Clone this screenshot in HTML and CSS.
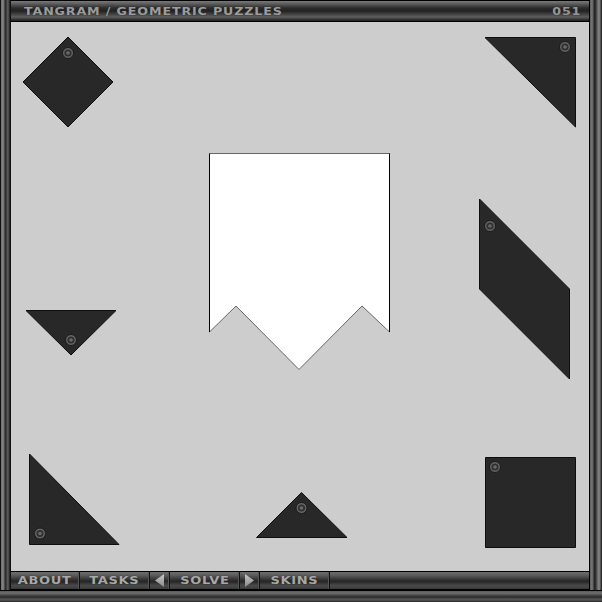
FILE: index.html
```html
<!DOCTYPE html>
<html lang="en">
<head>
    <meta charset="UTF-8">
    <title>Tangram / Geometric Puzzles</title>
    <link rel="stylesheet" href="styles.css">
</head>
<body>
    <div class="frame">
        <div class="side side-left"></div>
        <div class="topbar">
            <span class="title">TANGRAM / GEOMETRIC PUZZLES</span>
            <span class="number">051</span>
        </div>
        <div class="side side-right"></div>

        <div class="board">
            <svg class="pieces" width="578" height="549" viewBox="11 22 578 549">
                <defs>
                    <g id="screw">
                        <circle r="5.5" fill="#666" stroke="#1a1a1a" stroke-width="1"/>
                        <circle r="3.6" fill="#303030"/>
                        <circle r="1.8" fill="#6a6a6a"/>
                    </g>
                </defs>

                <!-- target figure -->
                <polygon class="target" points="209.5,153.5 389.5,153.5 389.5,332 362,306 299,369.5 236,306 209.5,332"/>
                <line x1="209.5" y1="153.5" x2="209.5" y2="332" stroke="#000" stroke-width="1"/>
                <line x1="389.5" y1="153.5" x2="389.5" y2="332" stroke="#000" stroke-width="1"/>

                <!-- pieces -->
                <polygon class="piece" points="68,37 113,82 68,127 23,82"/>
                <use href="#screw" x="68" y="53"/>

                <polygon class="piece" points="485,37.5 575.5,37.5 575.5,127"/>
                <use href="#screw" x="565" y="47"/>

                <polygon class="piece" points="26,310.5 116,310.5 71,355"/>
                <use href="#screw" x="71" y="340"/>

                <polygon class="piece" points="479.5,199 569.5,289 569.5,379 479.5,289"/>
                <use href="#screw" x="490" y="226"/>

                <polygon class="piece" points="29.5,454 119,544.5 29.5,544.5"/>
                <use href="#screw" x="40" y="533.5"/>

                <polygon class="piece" points="301.5,492.5 347,537.5 256.5,537.5"/>
                <use href="#screw" x="301.5" y="508"/>

                <polygon class="piece" points="485.5,457.5 575.5,457.5 575.5,547.5 485.5,547.5"/>
                <use href="#screw" x="495" y="467"/>
            </svg>
        </div>

        <div class="bottombar">
            <a class="btn btn-about"><span class="label">ABOUT</span></a>
            <a class="btn"><span class="label">TASKS</span></a>
            <a class="btn btn-arrow">
                <svg width="9" height="13" viewBox="0 0 9 13"><polygon points="9,0 9,13 0,6.5" fill="url(#arrowGrad)"/></svg>
            </a>
            <a class="btn"><span class="label">SOLVE</span></a>
            <a class="btn btn-arrow">
                <svg width="9" height="13" viewBox="0 0 9 13">
                    <defs>
                        <linearGradient id="arrowGrad" x1="0" y1="0" x2="0" y2="1">
                            <stop offset="0" stop-color="#c8c8c8"/>
                            <stop offset="1" stop-color="#8a8a8a"/>
                        </linearGradient>
                    </defs>
                    <polygon points="0,0 9,6.5 0,13" fill="url(#arrowGrad)"/>
                </svg>
            </a>
            <a class="btn"><span class="label">SKINS</span></a>
        </div>
        <div class="bottomstrip"></div>
    </div>
</body>
</html>
```

FILE: styles.css
```css
body { margin: 0; background: #000; font-family: "DejaVu Sans", "Liberation Sans", sans-serif; }

.frame {
    width: 602px;
    height: 602px;
    display: grid;
    grid-template-columns: 11px 578px 13px;
    grid-template-rows: 22px 549px 19px 12px;
    background: #111;
}

.side { grid-row: 1 / 4; }
.side-left {
    grid-column: 1;
    background: linear-gradient(to right, #111 0, #111 1px, #6a6a6a 1px, #8a8a8a 3px, #3a3a3a 5px, #222 6px, #5e5e5e 7px, #444 9px, #111 10px, #111 11px);
}
.side-right {
    grid-column: 3;
    background: linear-gradient(to right, #000 0, #000 1px, #5a5a5a 1px, #7a7a7a 3px, #333 5px, #1e1e1e 6px, #5a5a5a 8px, #8a8a8a 10px, #444 12px, #111 13px);
}

.topbar {
    grid-column: 2;
    grid-row: 1;
    display: flex;
    align-items: center;
    justify-content: space-between;
    padding: 0 8px 0 13px;
    border-top: 1px solid #000;
    border-bottom: 1px solid #000;
    background: linear-gradient(to bottom, #7a7a7a 0, #5a5a5a 15%, #2c2c2c 35%, #222 50%, #4a4a4a 70%, #5e5e5e 80%, #333 92%, #1e1e1e 100%);
}
.title, .number {
    font-size: 11px;
    font-weight: bold;
    letter-spacing: 0.75px;
    color: #9c9c9c;
    text-shadow: 0 0 1px #222;
    line-height: 1;
    padding-top: 1px;
    transform: scaleX(1.15);
}
.title { transform-origin: left center; }
.number { transform-origin: right center; color: #959595; }

.board {
    grid-column: 2;
    grid-row: 2;
    background: #cdcdcd;
    position: relative;
    overflow: hidden;
}
.pieces { display: block; }
.piece { fill: #282828; stroke: #0e0e0e; stroke-width: 1; }
.target { fill: #fff; stroke: #666; stroke-width: 1; }

.bottombar {
    grid-column: 2;
    grid-row: 3;
    display: flex;
    border-top: 1px solid #000;
    border-bottom: 1px solid #000;
    background: linear-gradient(to bottom, #6e6e6e 0, #5a5a5a 20%, #333 45%, #262626 55%, #4a4a4a 80%, #3a3a3a 100%);
}
.btn {
    width: 70px;
    display: flex;
    align-items: center;
    justify-content: center;
    border-right: 1px solid #111;
    box-shadow: inset -1px 0 0 #555;
    box-sizing: border-box;
}
.btn-about { width: 69px; }
.btn-arrow { width: 20px; }
.label {
    font-size: 10px;
    font-weight: bold;
    letter-spacing: 0.5px;
    color: #a8a8a8;
    text-shadow: 0 0 1px #222;
    transform: scaleX(1.3);
    line-height: 1;
    padding-top: 1px;
}

.bottomstrip {
    grid-column: 1 / 4;
    grid-row: 4;
    border-top: 1px solid #000;
    background: linear-gradient(to bottom, #5a5a5a 0, #6e6e6e 20%, #3a3a3a 45%, #2a2a2a 55%, #555 75%, #444 90%, #222 100%);
}
```
